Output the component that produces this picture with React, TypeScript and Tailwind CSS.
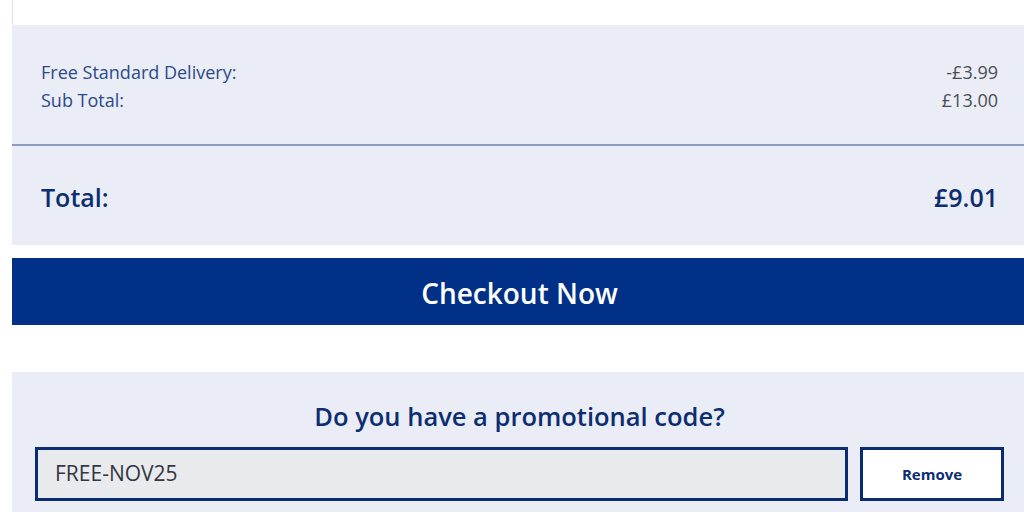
import React from "react";

const font = { fontFamily: "'Open Sans', Lato, sans-serif" };

export default function App() {
  return (
    <div className="w-[1024px] h-[512px] overflow-hidden bg-white" style={font}>
      <div className="ml-[12px] w-[1015px]">
        {/* tail of the basket card above */}
        <div className="h-[25px] border-l border-[#dfe2ea] bg-white" />

        {/* order summary */}
        <div className="bg-[#eaedf5]">
          <div className="px-[29px] pt-[33px] pb-[30px] text-[18px] leading-[28px]">
            <div className="flex justify-between">
              <span className="text-[#2a4a8a]">Free Standard Delivery:</span>
              <span className="text-[#4a4d55]">-£3.99</span>
            </div>
            <div className="flex justify-between">
              <span className="text-[#2a4a8a]">Sub Total:</span>
              <span className="text-[#4a4d55]">£13.00</span>
            </div>
          </div>
          <div className="h-[2px] bg-[#8f9bc3]" />
          <div className="flex h-[99px] items-center justify-between px-[29px] pt-[5px] text-[25px] font-semibold text-[#0d2d72]">
            <span>Total:</span>
            <span>£9.01</span>
          </div>
        </div>

        <button className="mt-[13px] flex h-[67px] w-full items-center justify-center bg-[#003087] pt-[2px] text-[28px] font-semibold text-white">
          Checkout Now
        </button>

        {/* promo code */}
        <div className="mt-[47px] bg-[#eaedf5] px-[23px] pt-[26px] pb-[20px]">
          <h2 className="text-center text-[25.5px] font-semibold leading-[36px] text-[#0d2d72]">
            Do you have a promotional code?
          </h2>
          <div className="mt-[13px] flex gap-[12px]">
            <div className="flex h-[54px] flex-1 items-center border-[3px] border-[#0b2c73] bg-[#e8eaee] px-[17px] text-[21px] text-[#333740]">
              FREE-NOV25
            </div>
            <button className="flex h-[54px] w-[144px] items-center justify-center border-[3px] border-[#0b2c73] bg-white text-[15px] font-bold text-[#0d2d72]">
              Remove
            </button>
          </div>
        </div>
      </div>
    </div>
  );
}
